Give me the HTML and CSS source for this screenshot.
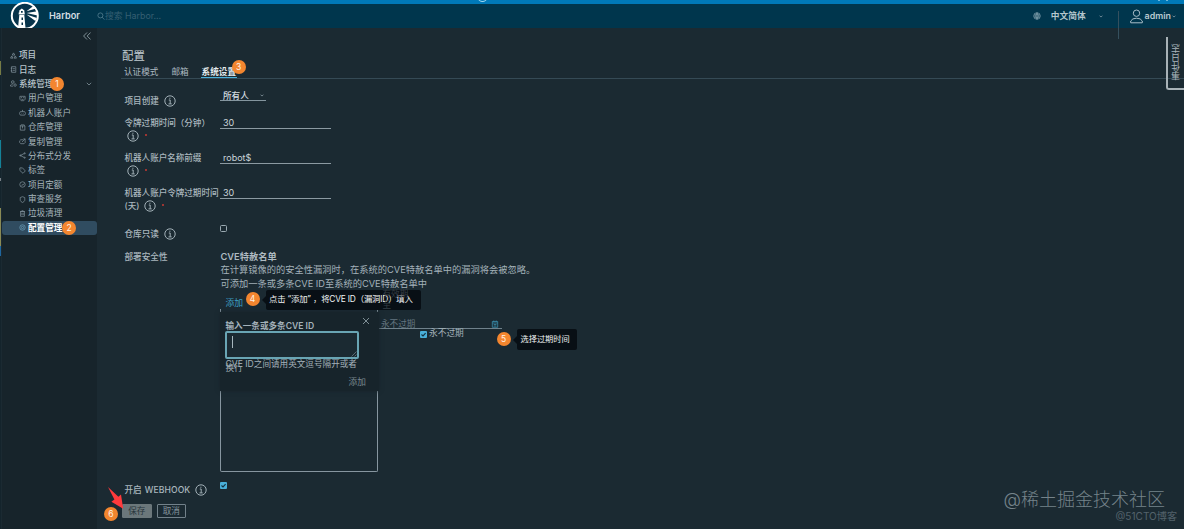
FILE: index.html
```html
<!DOCTYPE html>
<html lang="zh-CN">
<head>
<meta charset="utf-8">
<title>Harbor</title>
<link rel="stylesheet" href="styles.css">
</head>
<body>
<svg width="0" height="0" class="defs">
  <defs>
    <symbol id="info" viewBox="0 0 12 12"><circle cx="6" cy="6" r="5.2"/><path d="M4.8 5h1.4v3.8M4.5 8.9h3.2M5.9 2.7v1.1"/></symbol>
    <symbol id="tick" viewBox="0 0 7 7"><rect x="0" y="0" width="7" height="7" rx="1" fill="#49afd9" stroke="none"/><path d="M1.5 3.5l1.5 1.4L5.6 2.1" stroke="#12303f" stroke-width="1.1"/></symbol>
  </defs>
</svg>
<div class="page">
  <div class="stripe"><i class="arc"></i><i class="marks"></i></div>
  <header class="header">
    <svg class="logo" viewBox="0 0 30 26">
      <circle cx="14.8" cy="13.8" r="13" fill="#07334a" stroke="#fff" stroke-width="2"/>
      <path d="M16.5 9.2L24 3.6l2.2 3zM16.5 11l11-1.8v4.2zM16.5 12.5l10.5 3.6-1.6 3z" fill="#fff" stroke="none"/>
      <path d="M8.7 10.5h6v2h-6zM9.3 8.6L11.8 6.4l2.6 2.2v2H9.3zM9.3 13h5l1.2 13H8z" fill="#fff" stroke="none"/>
      <path d="M11 9h1.7v1.8H11zM11.5 15.5h1.5v2.5h-1.5zM11.5 20.5h1.5V23h-1.5z" fill="#07334a" stroke="none"/>
    </svg>
    <b class="brand">Harbor</b>
    <svg class="mag" viewBox="0 0 8 8"><circle cx="3.4" cy="3.4" r="2.5"/><path d="M5.2 5.2L7.4 7.6"/></svg>
    <span class="search">搜索 Harbor...</span>
    <svg class="globe" viewBox="0 0 8 8"><circle cx="4" cy="4" r="3.3"/><path d="M.7 4h6.6M1.2 2.3h5.6M1.2 5.7h5.6M4 .7v6.6M4 .7Q1 4 4 7.3Q7 4 4 .7"/></svg>
    <b class="lang">中文简体</b>
    <svg class="tiny lang-caret" viewBox="0 0 4 3"><path d="M.6.8L2 2 3.4.8"/></svg>
    <i class="divider"></i>
    <svg class="user" viewBox="0 0 13 15"><circle cx="6.5" cy="4.2" r="3.2"/><path d="M.7 13.8V12Q2.2 9.2 6.5 9.2T12.3 12v1.8z"/></svg>
    <b class="admin">admin</b>
    <svg class="tiny" viewBox="0 0 4 3"><path d="M.6.8L2 2 3.4.8"/></svg>
  </header>
  <div class="body">
    <div class="edge"></div>
    <nav class="side">
      <svg class="collapse" viewBox="0 0 8 8"><path d="M4 .5L.6 4 4 7.5M7.6.5L4.2 4l3.4 3.5"/></svg>
      <div class="item top"><svg viewBox="0 0 8 8"><path d="M4 1L5.5 3.5h-3zM2 4.5L3.4 7H.6zM6 4.5L7.4 7H4.6z"/></svg>项目</div>
      <div class="item top"><svg viewBox="0 0 8 8"><path d="M1.8.8h4.8v6.4H1.8zM.8 2.5h2M.8 5.5h2M3.5 3h2M3.5 5h2"/></svg>日志</div>
      <div class="item top"><svg viewBox="0 0 8 8"><circle cx="3.2" cy="2.3" r="1.5"/><path d="M.6 7V5.8Q1.5 4.5 3.2 4.5M.6 7h3"/><circle cx="5.8" cy="5.8" r="1.4"/></svg>系统管理<span class="num n1">1</span><svg class="chev" viewBox="0 0 6 4"><path d="M.8.8L3 3 5.2.8"/></svg></div>
      <div class="item"><svg viewBox="0 0 8 8"><path d="M1 1.5h6v3.3L5.5 6.5h-3L1 4.8zM2.2 3h1.3M4.7 3H6M2.8 5h2.4"/></svg>用户管理</div>
      <div class="item"><svg viewBox="0 0 8 8"><path d="M1.5 3h5l1 2-1 2h-5l-1-2zM4 3V1M3 5h.5M4.7 5h.5"/></svg>机器人账户</div>
      <div class="item"><svg viewBox="0 0 8 8"><path d="M1.5 2.2h5.2V7H1.5zM1 2.2L2.2 1h3.6L7 2.2M4 2.2V5"/></svg>仓库管理</div>
      <div class="item"><svg viewBox="0 0 8 8"><path d="M5 2H2L.8 3.2v2L2 6.5h3.8L7 5.3V3M3.5 4.5L7 1M5 1h2v2"/></svg>复制管理</div>
      <div class="item"><svg viewBox="0 0 8 8"><path d="M1.5 4L6.3 1.6M1.5 4l4.8 2.4"/><circle cx="1.5" cy="4" r=".7"/><circle cx="6.5" cy="1.5" r=".7"/><circle cx="6.5" cy="6.5" r=".7"/></svg>分布式分发</div>
      <div class="item"><svg viewBox="0 0 8 8"><path d="M1 1h3l3.2 3.5-2.6 2.7L1 4zM2.5 2.5h.3"/></svg>标签</div>
      <div class="item"><svg viewBox="0 0 8 8"><circle cx="4" cy="4" r="3.1"/><path d="M2.5 5.2l1-1 .8.5L6 2.8"/></svg>项目定额</div>
      <div class="item"><svg viewBox="0 0 8 8"><path d="M4 .8l2.6 1V5Q6 6.6 4 7.4 2 6.6 1.4 5V1.8z"/></svg>审查服务</div>
      <div class="item"><svg viewBox="0 0 8 8"><path d="M1.8 1.8h4.4v5.4H1.8zM1.2 1.8h5.6M3 .8h2M3.3 3.3v2.5M4.8 3.3v2.5"/></svg>垃圾清理</div>
      <div class="item active"><svg viewBox="0 0 8 8"><circle cx="4" cy="4" r="3.1"/><circle cx="4" cy="4" r="1.3"/></svg>配置管理<span class="num n2">2</span></div>
    </nav>
    <main class="main">
      <h1 class="title">配置</h1>
      <div class="tabs"><span>认证模式</span><span>邮箱</span><span class="on">系统设置<span class="num n3">3</span></span></div>
      <div class="row r-create"><div class="label">项目创建<svg class="info"><use href="#info"/></svg></div><div class="select">所有人<svg class="tiny" viewBox="0 0 4 3"><path d="M.6.8L2 2 3.4.8"/></svg></div></div>
      <div class="row"><div class="label two">令牌过期时间（分钟）<br><svg class="info"><use href="#info"/></svg><i class="req"></i></div><div class="input">30</div></div>
      <div class="row"><div class="label two">机器人账户名称前缀<br><svg class="info"><use href="#info"/></svg><i class="req"></i></div><div class="input">robot$</div></div>
      <div class="row"><div class="label two">机器人账户令牌过期时间<br>(天)<svg class="info after"><use href="#info"/></svg><i class="req"></i></div><div class="input">30</div></div>
      <div class="row r-ro"><div class="label">仓库只读<svg class="info"><use href="#info"/></svg></div><i class="box"></i></div>
      <div class="row r-sec">
        <div class="label plain">部署安全性</div>
        <div class="cve">
          <b>CVE特赦名单</b>
          <p>在计算镜像的的安全性漏洞时，在系统的CVE特赦名单中的漏洞将会被忽略。</p>
          <p>可添加一条或多条CVE ID至系统的CVE特赦名单中</p>
          <div class="add"><span>添加</span><span class="num">4</span></div>
          <div class="split">
            <div class="list"></div>
            <div class="expiry">
              <div class="date"><span>永不过期</span><svg viewBox="0 0 8 8"><path d="M1.3 1.5h5.4v5.8H1.3zM1.3 3h5.4M2.8.5v1.5M5.2.5v1.5M2.7 4.5h2.7M2.7 6h2.7"/></svg></div>
              <div class="never"><svg class="tick"><use href="#tick"/></svg>永不过期</div>
            </div>
          </div>
          <span class="valid">有效期<br>至</span>
          <div class="tip tip4">点击 “添加” ，将CVE ID（漏洞ID）填入</div>
          <span class="num n5">5</span>
          <div class="tip tip5">选择过期时间</div>
          <div class="pop">
            <svg class="close" viewBox="0 0 8 8"><path d="M1 1l6 6M7 1L1 7"/></svg>
            <b>输入一条或多条CVE ID</b>
            <div class="area"><i></i><svg viewBox="0 0 6 6"><path d="M.5 5.5l5-5M3.5 5.5l2-2"/></svg></div>
            <div class="hint">CVE ID之间请用英文逗号隔开或者<br>换行</div>
            <div class="pop-add">添加</div>
          </div>
        </div>
      </div>
      <div class="row r-hook"><div class="label">开启 <span class="wide">WEBHOOK</span><svg class="info"><use href="#info"/></svg></div><svg class="tick"><use href="#tick"/></svg></div>
      <div class="buttons"><span class="btn save">保存</span><span class="btn">取消</span>
        <span class="num n6">6</span>
        <svg class="arrow" viewBox="0 0 18 24"><path d="M1 1l10.4 9.8 2.6-2.2 2.2 14.2L4.4 15.8l3-2.3z" fill="#ff3a3c"/></svg>
      </div>
    </main>
  </div>
  <div class="events">事件日志</div>
  <div class="mark big">@稀土掘金技术社区</div>
  <div class="mark small">@51CTO博客</div>
</div>
</body>
</html>
```
FILE: styles.css
```css
* { box-sizing: border-box; }
body { margin: 0; background: #1b2a32; color: #aebbc2; font: 8.6px/14px Inter, "Noto Sans CJK SC", sans-serif; }
svg { fill: none; stroke: #9aabb3; stroke-width: .8; flex: none; display: block; }
i { font-style: normal; }
.defs { position: absolute; }
.page { position: relative; width: 1184px; height: 529px; display: flex; flex-direction: column; overflow: hidden; }
.stripe { position: relative; height: 4px; background: #0079b8; flex: none; overflow: hidden; }
.arc { position: absolute; left: 478px; top: -6px; width: 9px; height: 8px; border: 1.5px solid #9fd8f0; border-radius: 50%; }
.marks { position: absolute; left: 1158px; top: 0; width: 10px; height: 1px; border: solid #6db8dc; border-width: 0 2px; }

.header { position: relative; height: 24px; flex: none; display: flex; align-items: center; background: #00364d; padding-left: 10px; }
.logo { width: 30px; height: 26px; margin-top: -2px; }
.brand { width: 48px; margin-left: 9px; color: #d5dee3; font-size: 9.2px; font-weight: 600; }
.mag { width: 8px; height: 8px; stroke: #547f91; }
.search { color: #365f72; font-size: 8.8px; white-space: nowrap; }
.globe { width: 8px; height: 8px; margin-left: auto; stroke: #8caab6; stroke-width: .6; }
.lang { margin-left: 10px; color: #b5c6ce; font-size: 8.7px; font-weight: 600; }
.tiny { width: 4px; height: 3px; stroke-width: .7; }
.lang-caret { margin-left: 13px; }
.divider { align-self: flex-start; width: 1px; height: 28px; margin: 7px 11px 0 15px; background: #35505e; }
.user { width: 13px; height: 15px; stroke-width: 1; stroke: #a9bec8; }
.admin { margin: 0 1px 0 2px; color: #b9c9d0; font-size: 8.9px; font-weight: 600; }
.header > .tiny:last-child { margin-right: 8px; }

.body { flex: 1; display: flex; min-height: 0; }
.edge { width: 1px; margin-right: 1px; background: linear-gradient(#14242c 0 33px, #767b45 33px 47px, #14242c 47px 112px, #148298 112px 140px, #14242c 140px 150px, #798087 150px 153px, #14242c 153px 180px, #8a8a55 180px 218px, #1e66a0 218px 228px, #14242c 228px); }
.side { width: 95px; background: #17242b; flex: none; }
.collapse { width: 8px; height: 8px; margin: 4px 0 8px 81px; }
.item { display: flex; align-items: center; height: 14.4px; padding-left: 17px; color: #a9b7be; position: relative; white-space: nowrap; }
.item > svg { width: 7px; height: 7px; margin-right: 2px; stroke: #83949d; stroke-width: .8; }
.item.top { padding-left: 8px; font-weight: 500; color: #b9c5cb; }
.item > .chev { width: 6px; height: 4px; margin: 0 5px 0 auto; }
.item.active { background: #304c60; color: #fff; font-weight: 600; border-radius: 3px; }
.item.active > svg { stroke: #6fa2bd; }
.num { display: inline-flex; align-items: center; justify-content: center; width: 14px; height: 14px; border-radius: 50%; background: #f3862f; color: #fff3e6; font-size: 8.5px; line-height: 14px; font-weight: 400; }
.n1 { position: absolute; left: 48px; top: 0; }
.n2 { position: absolute; left: 60px; top: 0; }
.n3 { position: absolute; left: 31px; top: -4px; }

.main { flex: 1; min-width: 0; position: relative; }
.title { margin: 21px 0 0 25px; font-size: 11.4px; line-height: 15px; font-weight: 400; color: #c3cdd2; }
.tabs { display: flex; gap: 13px; height: 15px; margin-left: 24px; padding-left: 3px; border-bottom: 1px solid #354a55; }
.tabs > span { position: relative; height: 14px; line-height: 17px; }
.tabs > .on { color: #e4ebee; font-weight: 600; border-bottom: 1.5px solid #49afd9; padding: 0 1px; margin-left: -1px; }
.row { display: flex; height: 35px; padding-left: 27.5px; }
.label { width: 95.5px; display: flex; align-items: center; height: 23px; font-weight: 500; white-space: nowrap; color: #aab7be; flex: none; }
.label.two { display: block; font-size: 8.55px; line-height: 12.5px; }
.info { width: 12px; height: 12px; margin-left: 5px; stroke: #a2b0b7; stroke-width: 1; }
.two .info { display: inline-block; vertical-align: middle; margin-left: 2px; }
.two .info.after { margin-left: 5px; }
.req { display: inline-block; width: 2px; height: 2px; margin: 0 0 3px 6px; border-radius: 1px; background: #c93a33; }
.r-create { height: 30px; padding-top: 10px; margin-bottom: 8px; }
.select { display: flex; align-items: center; justify-content: space-between; width: 46px; height: 12px; padding: 2px 2px 0 3px; border-bottom: 1px solid #84959e; color: #d4dce0; font-weight: 500; }
.input { width: 111px; height: 12px; padding-left: 3px; border-bottom: 1px solid #8c9aa2; color: #cbd5da; font-size: 9px; line-height: 12px; }
.box { width: 7px; height: 7px; margin: 3px 0 0; border: 1px solid #9aa9b1; border-radius: 1.5px; }
.r-ro { height: 28px; }
.r-sec { height: 228.5px; }
.label.plain { height: 13px; }
.cve { position: relative; width: 360px; font-size: 9.25px; line-height: 13.4px; color: #a4b2ba; margin-left: .5px; }
.cve > b { display: block; font-weight: 600; color: #afbbc2; }
.cve p { margin: 0; white-space: nowrap; }
.add { display: flex; align-items: center; gap: 3px; height: 18.8px; padding-left: 5px; color: #3b9fc2; font-size: 8.8px; }
.add > span:first-child { padding-top: 7px; }
.add .num { margin: -2px 0 0 -.5px; }
.split { display: flex; }
.list { width: 158px; height: 162.5px; margin-left: -.5px; border: 1px solid #8796a0; border-top: 0; border-radius: 0 0 2px 2px; flex: none; }
.expiry { width: 124px; padding-top: 8px; }
.date { display: flex; justify-content: space-between; height: 12px; padding: 1px 3px 0; border-bottom: 1px solid #6f818b; color: #647680; font-size: 8.6px; }
.date svg { width: 8px; height: 8px; margin-top: 2px; stroke: #398baa; }
.never { display: flex; align-items: center; gap: 2px; padding: 0 0 0 42px; height: 9px; font-size: 8.7px; white-space: nowrap; }
.never svg { margin-top: 1px; }
.tick { width: 7px; height: 7px; }
.valid { position: absolute; z-index: 5; left: 162px; top: 39px; line-height: 11px; font-size: 8.6px; color: #343e45; }
.tip { position: absolute; z-index: 2; background: #080f15; color: #f0f3f4; border-radius: 2px; white-space: nowrap; font-size: 8.4px; }
.tip::before { content: ""; position: absolute; left: -4px; top: 50%; margin-top: -4px; border: solid transparent; border-width: 4px 4px 4px 0; border-right-color: #080f15; }
.tip4 { left: 45px; top: 39.5px; width: 155px; height: 20px; padding-left: 3.5px; line-height: 19px; letter-spacing: -.2px; z-index: 4; }
.n5 { position: absolute; left: 276px; top: 82px; }
.tip5 { left: 296px; top: 79px; width: 60px; height: 21px; line-height: 21px; padding-left: 4px; font-size: 8.2px; }
.pop { position: absolute; z-index: 1; left: -1px; top: 62px; width: 159px; height: 79px; padding: 9px 0 0 6px; background: #17242b; box-shadow: 0 0 4px #17242b; }
.pop b { display: block; font-size: 8.6px; line-height: 11px; font-weight: 600; }
.close { position: absolute; left: 142px; top: 5px; width: 8px; height: 8px; }
.area { position: relative; width: 134px; height: 28px; margin: -1px 0 0 -.5px; border: 2px solid #69a5b4; border-radius: 2px; background: #1b2a32; padding: 3px 5px; }
.area i { display: block; width: 1px; height: 12px; background: #a7b7be; }
.area svg { position: absolute; right: 0; bottom: 0; width: 6px; height: 6px; stroke-width: .5; }
.hint { font-size: 8.6px; line-height: 4px; padding-top: 3px; white-space: nowrap; }
.pop-add { padding: 6px 0 0 123px; font-size: 8.7px; color: #7a8991; }
.r-hook { height: 25.5px; }
.r-hook .tick { margin-top: 3px; }
.wide { margin-left: 3px; letter-spacing: .1px; }
.buttons { position: relative; display: flex; gap: 5px; padding-left: 25px; }
.btn { width: 29.5px; height: 14px; border: 1px solid #72818a; border-radius: 1px; text-align: center; line-height: 13px; color: #84939c; }
.btn.save { background: #6b777b; border-color: #6b777b; color: #27353c; }
.n6 { position: absolute; left: 7px; top: 3px; }
.arrow { position: absolute; left: 10px; top: -18px; width: 18px; height: 24px; stroke: none; }
.events { position: absolute; right: 0; top: 37px; width: 18px; height: 53px; border: solid #a8b2b7; border-width: 2px 2px 0 0; border-radius: 0 3px 0 0; writing-mode: vertical-rl; transform: rotate(180deg); text-align: center; line-height: 16px; font-size: 9px; color: #aab6bc; }
.mark { position: absolute; color: #75838a; white-space: nowrap; }
.big { right: 19px; bottom: 17px; font-size: 18px; line-height: 24px; font-weight: 300; }
.small { right: 7px; bottom: 6px; font-size: 10.1px; line-height: 13px; color: #53626b; }
```
